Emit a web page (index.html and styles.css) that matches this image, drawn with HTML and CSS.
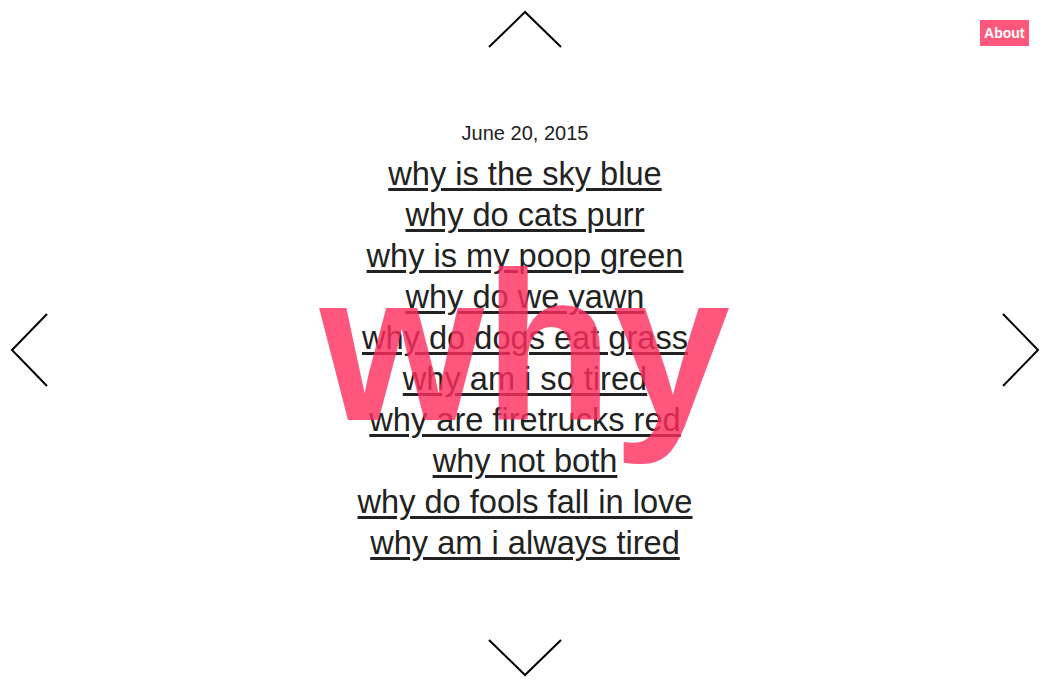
FILE: index.html
```html
<!DOCTYPE html>
<html>
<head>
<meta charset="utf-8">
<link rel="stylesheet" href="styles.css">
</head>
<body>
<div class="page">
  <a class="about" href="#">About</a>
  <svg class="nav nav-up" width="76" height="40" viewBox="0 0 76 40"><polyline points="2,38 38,3 74,38" /></svg>
  <svg class="nav nav-down" width="76" height="40" viewBox="0 0 76 40"><polyline points="2,2 38,37 74,2" /></svg>
  <svg class="nav nav-left" width="40" height="76" viewBox="0 0 40 76"><polyline points="38,2 3,38 38,74" /></svg>
  <svg class="nav nav-right" width="40" height="76" viewBox="0 0 40 76"><polyline points="2,2 37,38 2,74" /></svg>
  <main class="content">
    <div class="date">June 20, 2015</div>
    <ul class="list">
      <li><a href="#">why is the sky blue</a></li>
      <li><a href="#">why do cats purr</a></li>
      <li><a href="#">why is my poop green</a></li>
      <li><a href="#">why do we yawn</a></li>
      <li><a href="#">why do dogs eat grass</a></li>
      <li><a href="#">why am i so tired</a></li>
      <li><a href="#">why are firetrucks red</a></li>
      <li><a href="#">why not both</a></li>
      <li><a href="#">why do fools fall in love</a></li>
      <li><a href="#">why am i always tired</a></li>
    </ul>
  </main>
  <div class="why">why</div>
</div>
</body>
</html>
```

FILE: styles.css
```css
html, body {
  margin: 0;
  padding: 0;
  background: #fff;
}
body {
  font-family: "Liberation Sans", Arial, Helvetica, sans-serif;
  color: #222;
}
.page {
  position: relative;
  width: 1050px;
  height: 688px;
  overflow: hidden;
}
.content {
  display: flex;
  flex-direction: column;
  align-items: center;
  padding-top: 121px;
}
.date {
  font-size: 20px;
  line-height: 24px;
  margin-bottom: 8px;
}
.list {
  list-style: none;
  margin: 0;
  padding: 0;
  text-align: center;
}
.list li {
  font-size: 32.6px;
  line-height: 41px;
}
.list a {
  color: #222;
  text-decoration: underline;
  text-decoration-thickness: 2.5px;
  text-underline-offset: 3px;
}
.why {
  position: absolute;
  left: 50%;
  top: 242px;
  transform: translateX(-50%);
  font-size: 211px;
  line-height: 1;
  font-weight: bold;
  color: #ff2d5f;
  opacity: 0.8;
  pointer-events: none;
}
.about {
  position: absolute;
  top: 20px;
  right: 21px;
  background: #ff577c;
  color: #fff;
  font-weight: bold;
  font-size: 14px;
  line-height: 26px;
  padding: 0 4.5px;
  text-decoration: none;
}
.nav {
  position: absolute;
  fill: none;
  stroke: #000;
  stroke-width: 2;
}
.nav-up { left: 487px; top: 9px; }
.nav-down { left: 487px; top: 638px; }
.nav-left { left: 9px; top: 312px; }
.nav-right { left: 1001px; top: 312px; }
```
